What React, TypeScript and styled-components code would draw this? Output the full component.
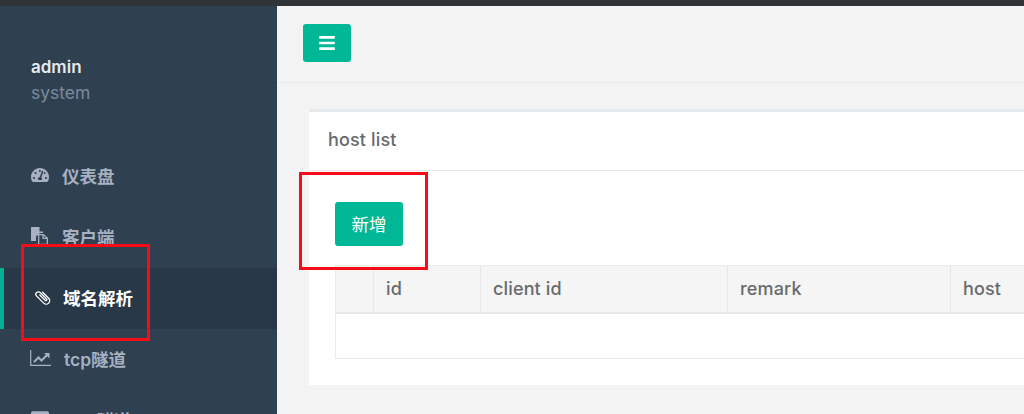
import React from "react";
import styled, { createGlobalStyle } from "styled-components";
import { FaBars, FaTachometerAlt, FaTable } from "react-icons/fa";

const Global = createGlobalStyle`
  html, body { margin: 0; padding: 0; background: #f3f3f4; }
  body { font-family: Inter, "Noto Sans CJK SC", sans-serif; }
  * { box-sizing: border-box; }
`;

const Page = styled.div`
  position: relative;
  width: 1024px;
  height: 414px;
  overflow: hidden;
  background: #f3f3f4;
`;
const TopStrip = styled.div`
  height: 6px;
  background: #303437;
`;
const Layout = styled.div`
  display: flex;
  height: 408px;
`;
const Sidebar = styled.aside`
  flex: 0 0 277px;
  background: #2f4050;
  overflow: hidden;
`;
const Profile = styled.div`
  height: 140px;
  padding: 50px 0 0 31px;
`;
const UserName = styled.div`
  font-size: 17px;
  line-height: 22px;
  font-weight: 600;
  color: #e6e9ed;
`;
const Role = styled.div`
  font-size: 17.5px;
  line-height: 22px;
  margin-top: 4px;
  color: #7a8b9b;
`;
const NavItem = styled.div<{ $active?: boolean }>`
  display: flex;
  align-items: center;
  height: 61px;
  padding: 0 0 3px ${(p) => (p.$active ? "27px" : "31px")};
  border-left: ${(p) => (p.$active ? "4px solid #00b294" : "0")};
  background: ${(p) => (p.$active ? "#293846" : "transparent")};
  color: ${(p) => (p.$active ? "#ffffff" : "#a7b1c2")};
  font-size: 17.5px;
  font-weight: 600;
`;
const NavIcon = styled.span<{ $lead: number; $gap: number }>`
  display: flex;
  flex: none;
  margin-left: ${(p) => p.$lead}px;
  margin-right: ${(p) => p.$gap}px;
  font-size: 18px;
`;
const Main = styled.main`
  flex: 1;
  min-width: 0;
  overflow: hidden;
`;
const Header = styled.header`
  height: 77px;
  padding: 18px 0 0 26px;
  border-bottom: 1px solid #e7eaec;
`;
const MenuButton = styled.button`
  display: flex;
  align-items: center;
  justify-content: center;
  width: 48px;
  height: 38px;
  padding: 0;
  border: 0;
  border-radius: 3px;
  background: #00b796;
  color: #fff;
  font-size: 18px;
`;
const Panel = styled.section`
  width: 760px;
  margin: 26px 0 0 32px;
  background: #fff;
  border-top: 3px solid #e7eaec;
`;
const PanelTitle = styled.div`
  display: flex;
  align-items: center;
  height: 59px;
  padding: 0 0 4px 19px;
  border-bottom: 1px solid #e7eaec;
  color: #676a6c;
  font-size: 18px;
  font-weight: 500;
  letter-spacing: 0.15px;
`;
const PanelBody = styled.div`
  padding: 31px 0 26px 26px;
`;
const AddButton = styled.button`
  display: block;
  width: 68px;
  height: 44px;
  padding: 0 0 1px;
  border: 0;
  border-radius: 3px;
  background: #00b796;
  color: #fff;
  font-family: inherit;
  font-size: 17.5px;
  font-weight: 400;
`;
const Table = styled.div`
  margin-top: 19px;
  border: 1px solid #ebebeb;
  border-right: 0;
`;
const HeadRow = styled.div`
  display: grid;
  grid-template-columns: 37px 107px 247px 223px 1fr;
  height: 48px;
  background: #f5f5f6;
  border-bottom: 2px solid #e7e7e7;
`;
const HeadCell = styled.div`
  display: flex;
  align-items: center;
  padding: 0 0 1px 12px;
  border-left: 1px solid #e7e7e7;
  color: #676a6c;
  font-size: 18px;
  font-weight: 500;
  letter-spacing: 0.15px;
  &:first-child {
    border-left: 0;
  }
`;
const EmptyRow = styled.div`
  height: 44px;
  background: #fff;
`;
const Annotation = styled.div<{ $x: number; $y: number; $w: number; $h: number }>`
  position: absolute;
  left: ${(p) => p.$x}px;
  top: ${(p) => p.$y}px;
  width: ${(p) => p.$w}px;
  height: ${(p) => p.$h}px;
  border: 3px solid #f40c16;
  pointer-events: none;
`;

const FilesIcon = () => (
  <svg width="18" height="18" viewBox="0 0 18 18" fill="currentColor">
    <path d="M0 0h8.5v4.5H12V6H9L5 9.5V14H0z" />
    <path d="M7 7h5.5L17 11v7H7V7zm1.3 1.3v8.4h7.4V12h-4.3V8.3zm4.4.5v2h2.2z" fillRule="evenodd" />
  </svg>
);
const ClipIcon = () => (
  <svg width="18" height="18" viewBox="0 0 18 18" fill="none" stroke="currentColor" strokeWidth="1.3" strokeLinecap="round">
    <path
      transform="rotate(-45 9 9.5)"
      d="M12.5 5.5v8.5a3.5 3.5 0 0 1-7 0V4a2.5 2.5 0 0 1 5 0v9a1 1 0 0 1-2 0V5.5"
    />
  </svg>
);
const ChartIcon = () => (
  <svg width="21" height="16" viewBox="0 0 21 16" fill="none" stroke="currentColor">
    <path d="M.7 0v15.3H21" strokeWidth="1.2" />
    <path d="M4 12l4.5-4.5 3 3L17 5" strokeWidth="2" />
    <path d="M14 3h5.5v5.5z" fill="currentColor" stroke="none" />
  </svg>
);

const items = [
  { label: "仪表盘", icon: <FaTachometerAlt />, lead: 0, gap: 13 },
  { label: "客户端", icon: <FilesIcon />, lead: 0, gap: 13 },
  { label: "域名解析", icon: <ClipIcon />, lead: 3, gap: 11, active: true },
  { label: "tcp隧道", icon: <ChartIcon />, lead: -1, gap: 13 },
  { label: "udp隧道", icon: <FaTable />, lead: 0, gap: 15 },
];

export default function App() {
  return (
    <Page>
      <Global />
      <TopStrip />
      <Layout>
        <Sidebar>
          <Profile>
            <UserName>admin</UserName>
            <Role>system</Role>
          </Profile>
          {items.map((it) => (
            <NavItem key={it.label} $active={it.active}>
              <NavIcon $lead={it.lead} $gap={it.gap}>{it.icon}</NavIcon>
              {it.label}
            </NavItem>
          ))}
        </Sidebar>
        <Main>
          <Header>
            <MenuButton aria-label="menu">
              <FaBars />
            </MenuButton>
          </Header>
          <Panel>
            <PanelTitle>host list</PanelTitle>
            <PanelBody>
              <AddButton>新增</AddButton>
              <Table>
                <HeadRow>
                  <HeadCell />
                  <HeadCell>id</HeadCell>
                  <HeadCell>client id</HeadCell>
                  <HeadCell>remark</HeadCell>
                  <HeadCell>host</HeadCell>
                </HeadRow>
                <EmptyRow />
              </Table>
            </PanelBody>
          </Panel>
        </Main>
      </Layout>
      <Annotation $x={21} $y={244} $w={129} $h={97} />
      <Annotation $x={299} $y={172} $w={129} $h={98} />
    </Page>
  );
}
